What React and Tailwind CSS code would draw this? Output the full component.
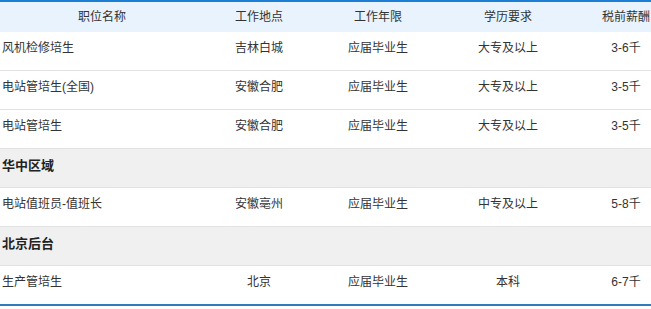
import React from "react";

const cols = ["职位名称", "工作地点", "工作年限", "学历要求", "税前薪酬"];

const rows = [
  { type: "job", cells: ["风机检修培生", "吉林白城", "应届毕业生", "大专及以上", "3-6千"] },
  { type: "job", cells: ["电站管培生(全国)", "安徽合肥", "应届毕业生", "大专及以上", "3-5千"] },
  { type: "job", cells: ["电站管培生", "安徽合肥", "应届毕业生", "大专及以上", "3-5千"] },
  { type: "group", title: "华中区域" },
  { type: "job", cells: ["电站值班员-值班长", "安徽亳州", "应届毕业生", "中专及以上", "5-8千"] },
  { type: "group", title: "北京后台" },
  { type: "job", cells: ["生产管培生", "北京", "应届毕业生", "本科", "6-7千"] },
];

const grid = "grid grid-cols-[204px_110px_128px_132px_104px]";

function App() {
  return (
    <div
      className="w-[651px] h-[309px] overflow-hidden bg-white text-[12px] text-[#333]"
      style={{ fontFamily: '"Liberation Sans", "Noto Sans CJK SC", sans-serif' }}
    >
      <div className="w-[678px] border-t-2 border-b-2 border-t-[#1b7fd6] border-b-[#2e7bbd]">
        <div className={`${grid} h-[30px] bg-[#e8f3fd] items-center`}>
          {cols.map((c) => (
            <div key={c} className="text-center leading-[20px]">
              {c}
            </div>
          ))}
        </div>
        {rows.map((r, i) => {
          const last = i === rows.length - 1;
          if (r.type === "group") {
            return (
              <div
                key={i}
                className="h-[39px] bg-[#f0f0f0] border-b border-[#e2e2e2] pt-[7px] pl-[2px] leading-[20px] text-[13px] font-bold text-[#222]"
              >
                {r.title}
              </div>
            );
          }
          return (
            <div
              key={i}
              className={`${grid} ${last ? "h-[38px]" : "h-[39px] border-b border-[#e2e2e2]"} pt-[6px] leading-[20px]`}
            >
              {r.cells.map((c, j) => (
                <div key={j} className={j === 0 ? "pl-[2px]" : "text-center"}>
                  {c}
                </div>
              ))}
            </div>
          );
        })}
      </div>
    </div>
  );
}

export default App;
